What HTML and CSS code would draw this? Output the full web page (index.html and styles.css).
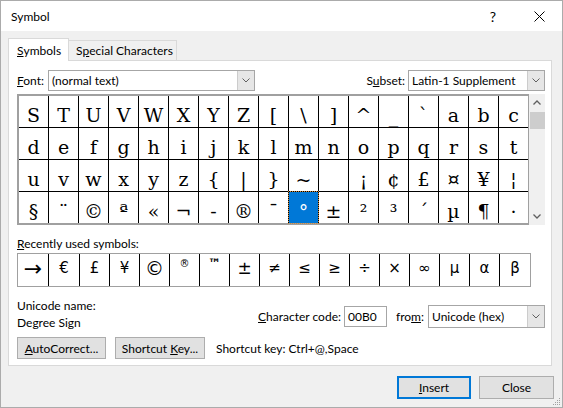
FILE: index.html
```html
<!DOCTYPE html>
<html>
<head>
<meta charset="utf-8">
<link rel="stylesheet" href="styles.css">
</head>
<body>
<div class="window">
  <div class="titlebar">
    <div class="title">Symbol</div>
    <div class="tb-btn help">?</div>
    <div class="tb-btn close"><svg width="11" height="11" viewBox="0 0 11 11"><path d="M0.5 0.5L10.5 10.5M10.5 0.5L0.5 10.5" stroke="#000" stroke-width="1" fill="none"/></svg></div>
  </div>
  <div class="main">
    <div class="tabs">
      <div class="tab active"><u>S</u>ymbols</div>
      <div class="tab">S<u>p</u>ecial Characters</div>
    </div>
    <div class="panel">
      <div class="font-row">
        <span class="font-lbl"><u>F</u>ont:</span>
        <div class="combo font-combo"><span class="combo-text">(normal text)</span><span class="drop"><svg width="8" height="5" viewBox="0 0 8 5"><path d="M0.5 0.5L4 4L7.5 0.5" stroke="#606060" fill="none"/></svg></span></div>
        <span class="subset-lbl">S<u>u</u>bset:</span>
        <div class="combo subset-combo"><span class="combo-text">Latin-1 Supplement</span><span class="drop"><svg width="8" height="5" viewBox="0 0 8 5"><path d="M0.5 0.5L4 4L7.5 0.5" stroke="#606060" fill="none"/></svg></span></div>
      </div>
      <div class="grid-area">
        <div class="grid">
          <div class="cell">S</div><div class="cell">T</div><div class="cell">U</div><div class="cell">V</div><div class="cell">W</div><div class="cell">X</div><div class="cell">Y</div><div class="cell">Z</div><div class="cell">[</div><div class="cell">\</div><div class="cell">]</div><div class="cell">^</div><div class="cell">_</div><div class="cell">`</div><div class="cell">a</div><div class="cell">b</div><div class="cell">c</div>
          <div class="cell">d</div><div class="cell">e</div><div class="cell">f</div><div class="cell">g</div><div class="cell">h</div><div class="cell">i</div><div class="cell">j</div><div class="cell">k</div><div class="cell">l</div><div class="cell">m</div><div class="cell">n</div><div class="cell">o</div><div class="cell">p</div><div class="cell">q</div><div class="cell">r</div><div class="cell">s</div><div class="cell">t</div>
          <div class="cell">u</div><div class="cell">v</div><div class="cell">w</div><div class="cell">x</div><div class="cell">y</div><div class="cell">z</div><div class="cell">{</div><div class="cell">|</div><div class="cell">}</div><div class="cell">~</div><div class="cell"></div><div class="cell">¡</div><div class="cell">¢</div><div class="cell">£</div><div class="cell">¤</div><div class="cell">¥</div><div class="cell">¦</div>
          <div class="cell">§</div><div class="cell">¨</div><div class="cell">©</div><div class="cell">ª</div><div class="cell">«</div><div class="cell">¬</div><div class="cell">-</div><div class="cell">®</div><div class="cell">¯</div><div class="cell sel">°</div><div class="cell">±</div><div class="cell">²</div><div class="cell">³</div><div class="cell">´</div><div class="cell">µ</div><div class="cell">¶</div><div class="cell">·</div>
        </div>
        <div class="scrollbar">
          <div class="sb-arrow"><svg width="8" height="5" viewBox="0 0 8 5"><path d="M0.5 4.5L4 1L7.5 4.5" stroke="#606060" stroke-width="1.3" fill="none"/></svg></div>
          <div class="sb-thumb"></div>
          <div class="sb-arrow sb-down"><svg width="8" height="5" viewBox="0 0 8 5"><path d="M0.5 0.5L4 4L7.5 0.5" stroke="#606060" stroke-width="1.3" fill="none"/></svg></div>
        </div>
      </div>
      <div class="recent-lbl"><u>R</u>ecently used symbols:</div>
      <div class="recent">
        <div class="rcell arrow">→</div><div class="rcell">€</div><div class="rcell">£</div><div class="rcell">¥</div><div class="rcell big">©</div><div class="rcell sup">®</div><div class="rcell tm">™</div><div class="rcell pm">±</div><div class="rcell">≠</div><div class="rcell">≤</div><div class="rcell">≥</div><div class="rcell">÷</div><div class="rcell">×</div><div class="rcell">∞</div><div class="rcell">μ</div><div class="rcell">α</div><div class="rcell">β</div>
      </div>
      <div class="info">
        <div class="uname">
          <div>Unicode name:</div>
          <div>Degree Sign</div>
        </div>
        <div class="code-group">
          <span><u>C</u>haracter code:</span>
          <div class="code-input">00B0</div>
          <span class="from-lbl">fro<u>m</u>:</span>
          <div class="combo from-combo"><span class="combo-text">Unicode (hex)</span><span class="drop"><svg width="8" height="5" viewBox="0 0 8 5"><path d="M0.5 0.5L4 4L7.5 0.5" stroke="#606060" fill="none"/></svg></span></div>
        </div>
      </div>
      <div class="btn-row">
        <div class="btn btn-auto"><span><u>A</u>utoCorrect...</span></div>
        <div class="btn btn-short"><span>Shortcut <u>K</u>ey...</span></div>
        <span class="shortcut-text">Shortcut key: Ctrl+@,Space</span>
      </div>
    </div>
    <div class="footer">
      <div class="btn btn-insert"><span><u>I</u>nsert</span></div>
      <div class="btn btn-close"><span>Close</span></div>
    </div>
  </div>
  <svg class="grip" width="9" height="9" viewBox="0 0 9 9">
    <rect x="7" y="1" width="1" height="1" fill="#a0a0a0"/>
    <rect x="5" y="3" width="1" height="1" fill="#a0a0a0"/><rect x="7" y="3" width="1" height="1" fill="#a0a0a0"/>
    <rect x="3" y="5" width="1" height="1" fill="#a0a0a0"/><rect x="5" y="5" width="1" height="1" fill="#a0a0a0"/><rect x="7" y="5" width="1" height="1" fill="#a0a0a0"/>
    <rect x="1" y="7" width="1" height="1" fill="#a0a0a0"/><rect x="3" y="7" width="1" height="1" fill="#a0a0a0"/><rect x="5" y="7" width="1" height="1" fill="#a0a0a0"/><rect x="7" y="7" width="1" height="1" fill="#a0a0a0"/>
  </svg>
</div>
</body>
</html>
```

FILE: styles.css
```css
* { box-sizing: border-box; }
html, body { margin: 0; padding: 0; }
body {
  width: 563px;
  height: 408px;
  overflow: hidden;
  font-family: Lato, "Liberation Sans", sans-serif;
  font-size: 12px;
  color: #000;
  background: #f0f0f0;
}
u { text-decoration: underline; text-underline-offset: 1px; }

.window {
  width: 563px;
  height: 408px;
  border: 1px solid #ababab;
  background: #f0f0f0;
  display: flex;
  flex-direction: column;
  position: relative;
}

.titlebar {
  height: 30px;
  flex: none;
  background: #fff;
  display: flex;
  align-items: center;
  padding-left: 10px;
}
.title { flex: 1; font-size: 12px; }
.tb-btn {
  width: 46px;
  height: 30px;
  display: flex;
  align-items: center;
  justify-content: center;
}
.help { font-size: 14px; }

.main { padding: 7px 9px 0 7px; }

.tabs {
  display: flex;
  align-items: flex-end;
  height: 22px;
  position: relative;
  z-index: 1;
}
.tab {
  height: 20px;
  width: 108px;
  border: 1px solid #d9d9d9;
  border-bottom: none;
  border-left: none;
  background: #f0f0f0;
  display: flex;
  align-items: center;
  padding-left: 7px;
}
.tab.active {
  width: 61px;
  height: 23px;
  margin-bottom: -1px;
  border-left: 1px solid #d9d9d9;
  background: #fff;
  padding-left: 8px;
}

.panel {
  width: 544px;
  height: 306px;
  border: 1px solid #d9d9d9;
  background: #fff;
  padding: 9px 6px 0 8px;
}

.font-row {
  display: flex;
  align-items: center;
  height: 21px;
}
.font-lbl { width: 31px; }
.subset-lbl { margin-left: auto; margin-right: 3px; }

.combo {
  height: 21px;
  border: 1px solid #a6a6a6;
  background: #fff;
  display: flex;
  align-items: stretch;
}
.combo-text {
  flex: 1;
  padding-left: 3px;
  display: flex;
  align-items: center;
}
.drop {
  width: 17px;
  background: #e6e6e6;
  border-left: 1px solid #cccccc;
  display: flex;
  align-items: center;
  justify-content: center;
}
.font-combo { width: 207px; }
.subset-combo { width: 137px; }

.grid-area {
  display: flex;
  margin-top: 3px;
}
.grid {
  display: grid;
  grid-template-columns: repeat(17, 29px);
  grid-auto-rows: 31px;
  gap: 1px;
  background: #000;
  border: 2px solid #a0a0a0;
  border-right-width: 1px;
}
.cell {
  background: #fff;
  text-align: center;
  font-family: "DejaVu Serif", serif;
  font-size: 19px;
  line-height: 39px;
  height: 31px;
  overflow: hidden;
}
.cell.sel {
  background: #0078d7;
  color: #fff;
  outline: 1px dotted #d08a3a;
  outline-offset: 0;
}

.scrollbar {
  width: 16px;
  background: #f0f0f0;
  display: flex;
  flex-direction: column;
  align-items: center;
}
.sb-arrow {
  height: 17px;
  width: 16px;
  display: flex;
  align-items: center;
  justify-content: center;
}
.sb-down { margin-top: auto; }
.sb-thumb {
  width: 15px;
  height: 17px;
  margin-top: 1px;
  background: #cdcdcd;
}

.recent-lbl {
  margin-top: 11px;
  line-height: 15px;
}
.recent {
  margin-top: 2px;
  display: grid;
  grid-template-columns: 30px 30px repeat(14, 29px) 30px;
  grid-auto-rows: 32px;
  gap: 1px;
  background: #000;
  border: 1px solid #a0a0a0;
  width: max-content;
}
.rcell {
  background: #fff;
  text-align: center;
  font-family: "DejaVu Sans", sans-serif;
  font-size: 15px;
  line-height: 28px;
}
.rcell.arrow { font-size: 22px; line-height: 30px; }
.rcell.big { font-size: 19px; }
.rcell.sup { font-size: 10px; line-height: 20px; }
.rcell.tm { font-size: 13px; font-weight: bold; line-height: 20px; }
.rcell.pm { font-size: 17px; }

.info {
  display: flex;
  margin-top: 10px;
}
.uname { line-height: 17px; }
.code-group {
  margin-left: auto;
  margin-top: 8px;
  height: 23px;
  display: flex;
  align-items: center;
}
.code-input {
  width: 43px;
  height: 21px;
  margin-left: 3px;
  border: 1px solid #a6a6a6;
  padding-left: 3px;
  line-height: 19px;
}
.from-lbl { margin-left: 9px; margin-right: 4px; }
.from-combo { width: 117px; height: 23px; }

.btn-row {
  display: flex;
  align-items: center;
  margin-top: 6px;
}
.btn {
  height: 22px;
  background: #e1e1e1;
  border: 1px solid #adadad;
  display: flex;
  align-items: center;
  justify-content: center;
}
.btn-auto { width: 89px; }
.btn-short { width: 90px; margin-left: 9px; }
.shortcut-text { margin-left: 11px; }

.footer {
  display: flex;
  justify-content: flex-end;
  margin-top: 10px;
  margin-right: -1px;
}
.btn-insert {
  width: 74px;
  height: 23px;
  border: 2px solid #0078d7;
}
.btn-close {
  width: 75px;
  height: 23px;
  margin-left: 8px;
}

.grip {
  position: absolute;
  right: 1px;
  bottom: 1px;
}
```
